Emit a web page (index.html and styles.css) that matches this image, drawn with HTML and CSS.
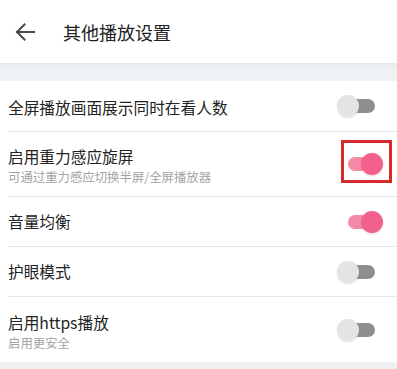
FILE: index.html
```html
<!DOCTYPE html>
<html lang="zh">
<head>
<meta charset="utf-8">
<link rel="stylesheet" href="styles.css">
</head>
<body>
<div class="page">
  <header class="topbar">
    <svg class="back" width="22" height="20" viewBox="0 0 22 20">
      <path d="M20 10H3M10.5 2.5L3 10l7.5 7.5" fill="none" stroke="#4a4a4a" stroke-width="2" stroke-linecap="square"/>
    </svg>
    <div class="title">其他播放设置</div>
  </header>
  <div class="band"></div>
  <ul class="list">
    <li class="row single first">
      <div class="texts"><div class="t">全屏播放画面展示同时在看人数</div></div>
      <span class="sw"><span class="track"></span><span class="thumb"></span></span>
    </li>
    <li class="row double">
      <div class="texts"><div class="t">启用重力感应旋屏</div><div class="s">可通过重力感应切换半屏/全屏播放器</div></div>
      <span class="sw on"><span class="track"></span><span class="thumb"></span><span class="mark"></span></span>
    </li>
    <li class="row single">
      <div class="texts"><div class="t">音量均衡</div></div>
      <span class="sw on"><span class="track"></span><span class="thumb"></span></span>
    </li>
    <li class="row single">
      <div class="texts"><div class="t">护眼模式</div></div>
      <span class="sw"><span class="track"></span><span class="thumb"></span></span>
    </li>
    <li class="row double last">
      <div class="texts"><div class="t">启用https播放</div><div class="s">启用更安全</div></div>
      <span class="sw"><span class="track"></span><span class="thumb"></span></span>
    </li>
  </ul>
  <div class="foot"></div>
</div>
</body>
</html>
```

FILE: styles.css
```css
html, body {
  margin: 0;
  padding: 0;
  background: #ffffff;
}
body {
  font-family: "Noto Sans CJK SC", "Noto Sans", sans-serif;
  color: #222222;
  width: 397px;
  height: 369px;
  overflow: hidden;
}
.topbar {
  height: 63px;
  display: flex;
  align-items: center;
  background: #ffffff;
}
.back {
  margin-left: 14px;
  margin-top: 1px;
}
.title {
  margin-left: 27px;
  font-size: 18px;
  line-height: 24px;
  color: #222;
}
.band {
  height: 18px;
  background: linear-gradient(#e2e6ea 0, #edf0f3 3px, #f0f3f5 100%);
}
.list {
  list-style: none;
  margin: 0;
  padding: 0;
}
.row {
  margin-left: 8px;
  display: flex;
  align-items: center;
  justify-content: space-between;
  border-bottom: 1px solid #e9e9e9;
  box-sizing: border-box;
}
.row.single { height: 50px; }
.row.first { height: 51px; }
.row.first .texts { padding-top: 4px; }
.row.double { height: 65px; }
.row.double .texts { padding-top: 4px; }
.row.last { border-bottom: none; }
.t {
  font-size: 15.7px;
  line-height: 22px;
  color: #222;
}
.s {
  font-size: 12.4px;
  line-height: 18px;
  color: #a3a3a3;
}
.sw {
  position: relative;
  width: 46px;
  height: 24px;
  margin-right: 14px;
  flex: none;
}
.track {
  position: absolute;
  left: 11px;
  top: 5px;
  width: 27px;
  height: 14px;
  border-radius: 7px;
  background: #8e8e8e;
}
.thumb {
  position: absolute;
  left: 0;
  top: 1px;
  width: 22px;
  height: 22px;
  border-radius: 50%;
  background: #e4e4e4;
  box-shadow: 0 1px 2px rgba(0,0,0,0.12);
}
.sw.on .track { background: #f58aa6; }
.sw.on .thumb {
  left: 24px;
  background: #f2608c;
  box-shadow: 0 1px 2px rgba(180,40,80,0.2);
}
.mark {
  position: absolute;
  left: 4px;
  top: -12px;
  width: 45px;
  height: 37px;
  border: 3px solid #d62b2b;
}
.foot {
  height: 10px;
  background: #f0f1f3;
}
```
